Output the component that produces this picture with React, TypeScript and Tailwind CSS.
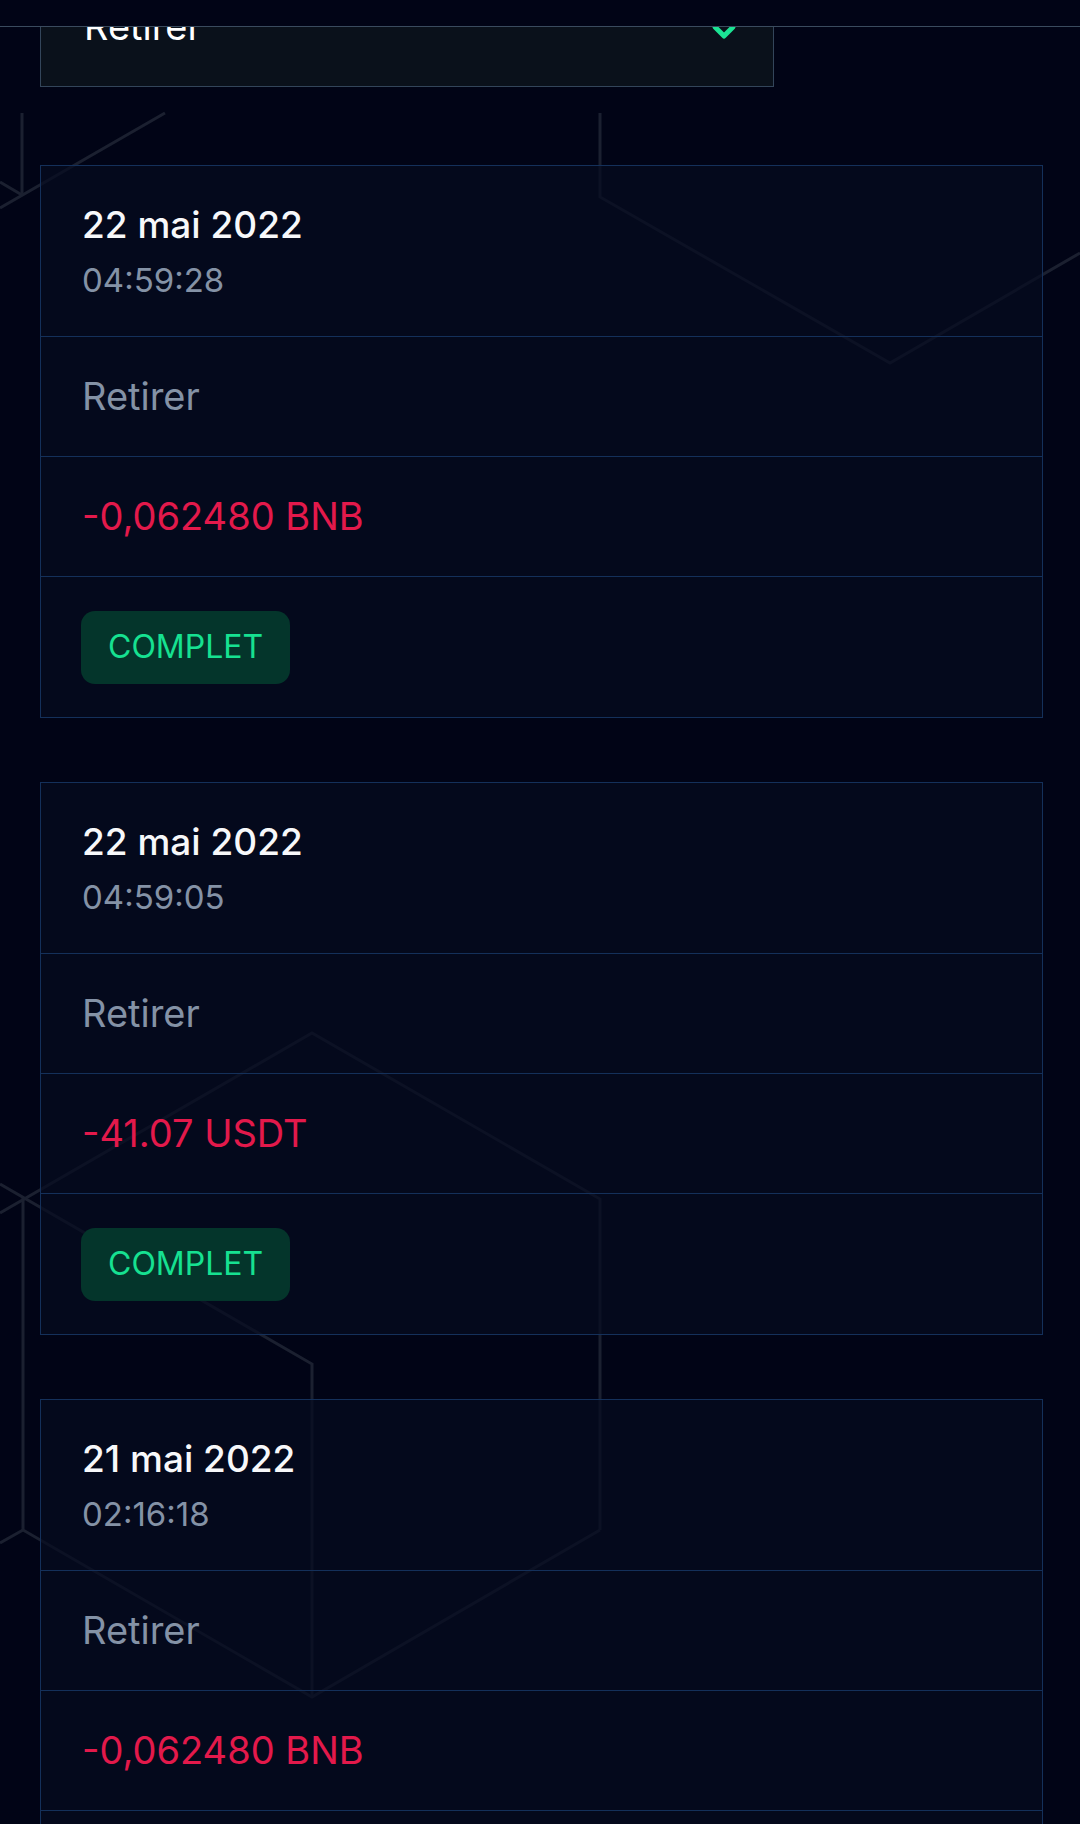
import React from "react"

const history = [
  { date: "22 mai 2022", time: "04:59:28", amount: "-0,062480 BNB" },
  { date: "22 mai 2022", time: "04:59:05", amount: "-41.07 USDT" },
  { date: "21 mai 2022", time: "02:16:18", amount: "-0,062480 BNB" },
]

// faint hexagon lines from the page background
const BgLines = () => (
  <svg
    className="absolute inset-0 pointer-events-none"
    width="1080"
    height="1824"
    viewBox="0 0 1080 1824"
    fill="none"
    stroke="#1b2030"
    strokeWidth="3"
  >
    <path d="M22 113V195" />
    <path d="M165 113L0 208" />
    <path d="M0 182L22 195" />
    <path d="M600 113V197L890 363L1080 253" />
    <path d="M0 1213L312 1033L600 1199V1530" />
    <path d="M0 1184L312 1364V1697" />
    <path d="M23 1198V1530L312 1697L600 1530" />
    <path d="M23 1530L0 1543" />
  </svg>
)

const Card = ({ date, time, amount }: { date: string; time: string; amount: string }) => {
  return (
    <div className="border border-[#14305a] bg-[#060c20]/70 divide-y divide-[#14305a]">
      <div className="h-[171px] flex flex-col justify-center pl-[41px] pt-[3px]">
        <p className="text-[37px] leading-[56px] font-medium text-[#f7f8fa]">{date}</p>
        <p className="text-[33px] leading-[55px] text-[#8492a6]">{time}</p>
      </div>
      <div className="h-[120px] flex items-center pl-[41px] text-[38px] text-[#8492a6]">
        Retirer
      </div>
      <div className="h-[120px] flex items-center pl-[41px] text-[38px] text-[#e3194b]">
        {amount}
      </div>
      <div className="h-[140px] flex items-center pl-[40px]">
        <span className="h-[73px] px-[27px] rounded-[14px] bg-[#04352b] text-[#16e191] text-[32px] flex items-center">
          COMPLET
        </span>
      </div>
    </div>
  )
}

export default function App() {
  return (
    <div
      className="relative h-[1824px] w-[1080px] overflow-hidden bg-[#010416]"
      style={{ fontFamily: "Inter, 'Noto Sans', sans-serif" }}
    >
      <BgLines />

      {/* header edge */}
      <div className="absolute top-0 inset-x-0 h-[27px] bg-[#010416] border-b border-[#3a4b5e] z-20" />

      <div className="relative z-10 pl-[40px] pr-[37px]">
        {/* type select */}
        <div className="-mt-[53px] h-[140px] w-[734px] border border-[#33455a] bg-[#0a111b] flex items-end justify-between pl-[43px] pr-[35px] pb-[41px]">
          <span className="text-[38px] leading-none text-white">Retirer</span>
          <svg width="28" height="28" viewBox="0 0 28 28" fill="none" stroke="#1be394" strokeWidth="5" strokeLinecap="round" strokeLinejoin="round">
            <path d="M5 10L14 19L23 10" />
          </svg>
        </div>

        <div className="mt-[78px] flex flex-col gap-[64px]">
          {history.map((item, index) => (
            <Card key={index} {...item} />
          ))}
        </div>
      </div>
    </div>
  )
}
